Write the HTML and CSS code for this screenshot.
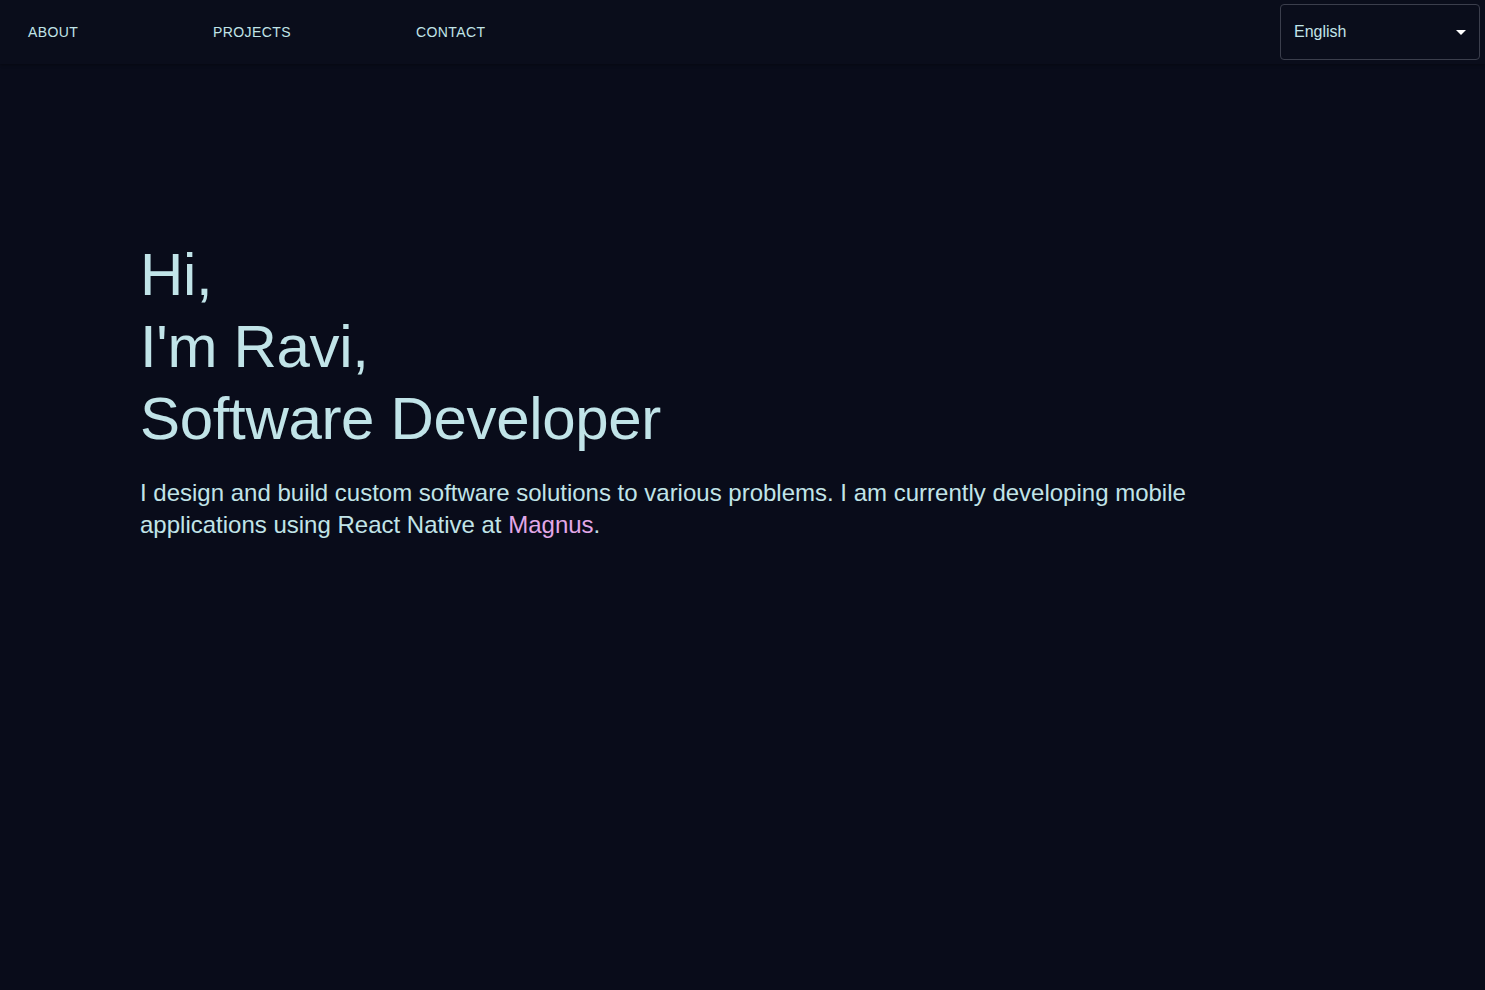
FILE: index.html
```html
<!DOCTYPE html>
<html lang="en">
<head>
<meta charset="utf-8">
<title>Ravi</title>
<link rel="stylesheet" href="styles.css">
</head>
<body>
<header class="topbar">
  <nav class="nav">
    <a class="nav-link" href="#about">ABOUT</a>
    <a class="nav-link" href="#projects">PROJECTS</a>
    <a class="nav-link" href="#contact">CONTACT</a>
  </nav>
  <div class="lang-select">
    <span class="lang-value">English</span>
    <svg class="lang-arrow" width="10" height="5" viewBox="0 0 10 5"><path d="M0 0 L10 0 L5 5 Z" fill="#ffffff"/></svg>
  </div>
</header>
<main class="hero">
  <h1 class="hero-title">Hi,<br>I'm Ravi,<br>Software Developer</h1>
  <p class="hero-text">I design and build custom software solutions to various problems. I am currently developing mobile applications using React Native at <a class="accent" href="#">Magnus</a>.</p>
</main>
</body>
</html>
```

FILE: styles.css
```css
html, body {
  margin: 0;
  padding: 0;
  background: #090c1a;
  color: #c1e4e8;
  font-family: "Liberation Sans", Arial, sans-serif;
}
body {
  min-height: 990px;
}
.topbar {
  height: 64px;
  background: #0a0d1b;
  box-shadow: 0 1px 3px rgba(0, 0, 0, 0.35);
  display: flex;
  align-items: center;
  justify-content: space-between;
  padding: 0 5px 0 28px;
  box-sizing: border-box;
}
.nav {
  display: grid;
  grid-template-columns: 185px 203px auto;
  align-items: center;
}
.nav-link {
  color: #c1e4e8;
  text-decoration: none;
  font-size: 14px;
  letter-spacing: 0.4px;
}
.lang-select {
  width: 200px;
  height: 56px;
  box-sizing: border-box;
  border: 1px solid #3b3e4c;
  border-radius: 4px;
  display: flex;
  align-items: center;
  justify-content: space-between;
  padding: 0 13px 0 13px;
}
.lang-value {
  font-size: 16px;
  color: #c1e4e8;
}
.lang-arrow {
  display: block;
}
.hero {
  padding: 175px 0 0 140px;
}
.hero-title {
  margin: 0;
  font-weight: 400;
  font-size: 60px;
  line-height: 72px;
  letter-spacing: -0.33px;
  color: #c1e4e8;
}
.hero-text {
  margin: 22px 0 0;
  max-width: 1110px;
  font-size: 24px;
  line-height: 32px;
}
.accent {
  color: #e2a8e8;
  text-decoration: none;
}
```
